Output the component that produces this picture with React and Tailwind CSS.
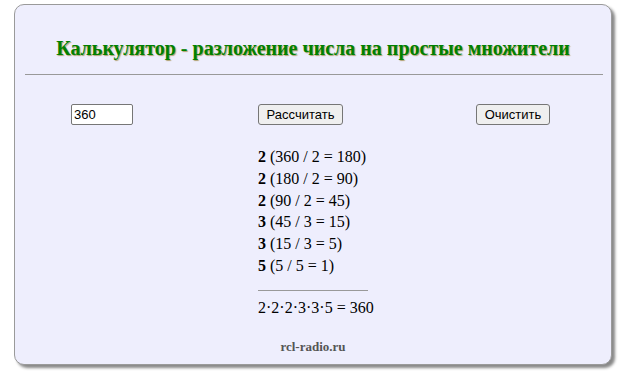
export default function App() {
  const steps = [
    ["2", "(360 / 2 = 180)"],
    ["2", "(180 / 2 = 90)"],
    ["2", "(90 / 2 = 45)"],
    ["3", "(45 / 3 = 15)"],
    ["3", "(15 / 3 = 5)"],
    ["5", "(5 / 5 = 1)"],
  ];
  return (
    <div className="w-[623px] h-[378px] bg-white pt-[4px] pl-[14px]" style={{ fontFamily: '"Liberation Serif", serif' }}>
      <div className="w-[598px] h-[361px] bg-[#eeeefd] border border-[#9a9a9a] rounded-[10px] shadow-[3px_3px_3px_#888] flex flex-col">
        <h1 className="mt-[31px] text-center text-[20px] leading-[24px] font-bold text-[#008000] [text-shadow:1px_1px_1px_#b0a070]">
          Калькулятор - разложение числа на простые множители
        </h1>
        <div className="mt-[14px] ml-[10px] mr-[8px] h-px bg-[#999]" />
        <div className="mt-[29px] flex items-start h-[21px]">
          <input
            defaultValue="360"
            className="ml-[56px] w-[62px] h-[21px] bg-white border border-[#767676] rounded-[2px] px-[2px] text-[13px] text-black"
            style={{ fontFamily: '"Liberation Sans", Arial, sans-serif' }}
          />
          <button
            className="ml-[125px] w-[85px] h-[21px] bg-[#efefef] border border-[#767676] rounded-[3px] text-[13px] text-black leading-none"
            style={{ fontFamily: '"Liberation Sans", Arial, sans-serif' }}
          >
            Рассчитать
          </button>
          <button
            className="ml-[133px] w-[74px] h-[21px] bg-[#efefef] border border-[#767676] rounded-[3px] text-[13px] text-black leading-none"
            style={{ fontFamily: '"Liberation Sans", Arial, sans-serif' }}
          >
            Очистить
          </button>
        </div>
        <div className="ml-[243px] mt-[21px] text-[16px] leading-[21.8px] text-black">
          {steps.map(([a, b], i) => (
            <div key={i}>
              <b>{a}</b> {b}
            </div>
          ))}
          <div className="mt-[13px] w-[110px] h-px bg-[#999]" />
          <div className="mt-[6px]">2·2·2·3·3·5 = 360</div>
        </div>
        <div className="mt-[18px] text-center text-[13px] font-bold text-[#555]">rcl-radio.ru</div>
      </div>
    </div>
  );
}
